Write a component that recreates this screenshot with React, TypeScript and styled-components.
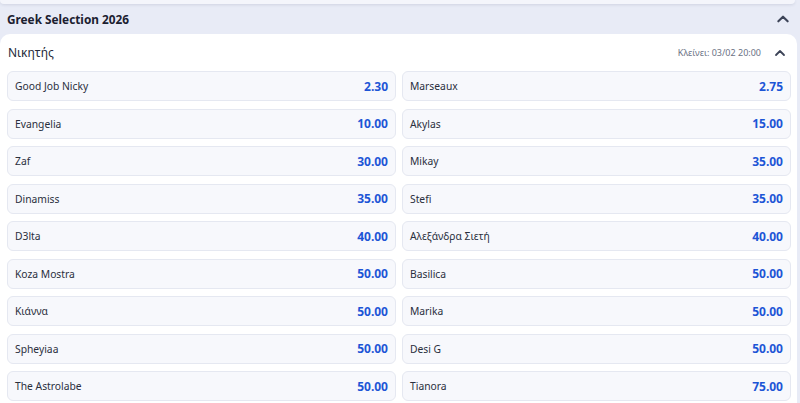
import styled, { createGlobalStyle } from 'styled-components';

const GlobalStyle = createGlobalStyle`
  body {
    margin: 0;
    background: #e8ebf6;
    font-family: "Noto Sans", "Open Sans", sans-serif;
    color: #1f2433;
  }
`;

const outcomes: [string, string][] = [
  ['Good Job Nicky', '2.30'],
  ['Marseaux', '2.75'],
  ['Evangelia', '10.00'],
  ['Akylas', '15.00'],
  ['Zaf', '30.00'],
  ['Mikay', '35.00'],
  ['Dinamiss', '35.00'],
  ['Stefi', '35.00'],
  ['D3lta', '40.00'],
  ['Αλεξάνδρα Σιετή', '40.00'],
  ['Koza Mostra', '50.00'],
  ['Basilica', '50.00'],
  ['Κιάννα', '50.00'],
  ['Marika', '50.00'],
  ['Spheyiaa', '50.00'],
  ['Desi G', '50.00'],
  ['The Astrolabe', '50.00'],
  ['Tianora', '75.00'],
];

function ChevronUp({ size = 12 }: { size?: number }) {
  return (
    <svg width={size} height={size} viewBox="0 0 12 12" fill="none">
      <path d="M2 8 L6 4 L10 8" stroke="#3d4458" strokeWidth="1.8" strokeLinecap="round" strokeLinejoin="round" />
    </svg>
  );
}

export default function App() {
  return (
    <>
      <GlobalStyle />
      <Page>
        <TopCard />
        <EventHeader>
          <EventTitle>Greek Selection 2026</EventTitle>
          <IconBox><ChevronUp size={14} /></IconBox>
        </EventHeader>
        <Market>
          <MarketHeader>
            <MarketTitle>Νικητής</MarketTitle>
            <MarketMeta>
              <Closes>Κλείνει: 03/02 20:00</Closes>
              <IconBox><ChevronUp /></IconBox>
            </MarketMeta>
          </MarketHeader>
          <Grid>
            {outcomes.map(([name, odds]) => (
              <Outcome key={name}>
                <Name>{name}</Name>
                <Odds>{odds}</Odds>
              </Outcome>
            ))}
          </Grid>
        </Market>
      </Page>
    </>
  );
}

const Page = styled.div`
  width: 797px;
  height: 403px;
  overflow: hidden;
  display: flex;
  flex-direction: column;
`;

const TopCard = styled.div`
  height: 4px;
  margin-right: 2px;
  background: #f4f5fb;
  border-radius: 0 0 10px 10px;
  box-shadow: 0 1px 3px rgba(40, 50, 90, 0.12);
`;

const EventHeader = styled.div`
  height: 30px;
  display: flex;
  align-items: center;
  justify-content: space-between;
  padding: 0 7px 0 7px;
`;

const EventTitle = styled.div`
  font-size: 11.8px;
  font-weight: 700;
  color: #1b2030;
`;

const IconBox = styled.span`
  display: flex;
  align-items: center;
  justify-content: center;
  width: 14px;
  height: 14px;
`;

const Market = styled.div`
  flex: 1;
  background: #ffffff;
  border-radius: 10px 10px 0 0;
  padding: 0 6px 0 7px;
`;

const MarketHeader = styled.div`
  height: 37px;
  display: flex;
  align-items: center;
  justify-content: space-between;
  padding-left: 1px;
`;

const MarketTitle = styled.div`
  font-size: 12px;
  color: #262b3a;
`;

const MarketMeta = styled.div`
  display: flex;
  align-items: center;
  gap: 12px;
  padding-right: 4px;
`;

const Closes = styled.span`
  font-size: 9px;
  color: #6b7285;
`;

const Grid = styled.div`
  display: grid;
  grid-template-columns: 1fr 1fr;
  column-gap: 6px;
  row-gap: 7.5px;
`;

const Outcome = styled.div`
  height: 30px;
  box-sizing: border-box;
  display: flex;
  align-items: center;
  justify-content: space-between;
  padding: 0 7px 0 7px;
  background: #f7f8fc;
  border: 1px solid #e5e8f1;
  border-radius: 6px;
`;

const Name = styled.span`
  font-size: 10.3px;
  color: #2a2f3d;
`;

const Odds = styled.span`
  font-size: 12px;
  font-weight: 700;
  color: #1d55d6;
`;
